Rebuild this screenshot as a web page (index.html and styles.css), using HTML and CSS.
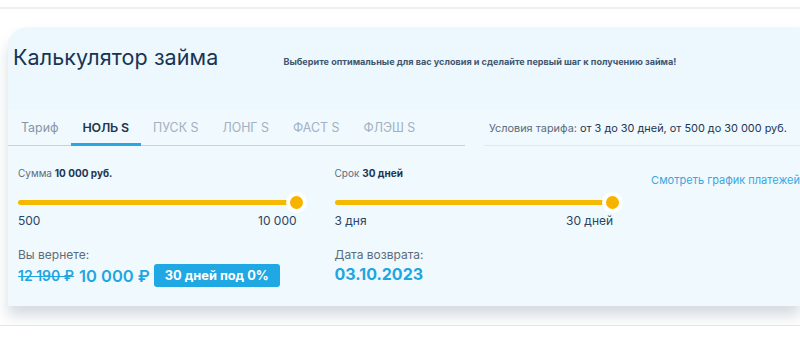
FILE: index.html
```html
<!DOCTYPE html>
<html lang="ru">
<head>
    <meta charset="UTF-8">
    <meta name="viewport" content="width=device-width, initial-scale=1.0">
    <title>Калькулятор займа</title>
    <link rel="stylesheet" href="styles.css">
</head>
<body>
<div class="topline"></div>
<div class="calc">
    <div class="calc-head">
        <h1 class="title">Калькулятор займа</h1>
        <p class="subtitle">Выберите оптимальные для вас условия и сделайте первый шаг к получению займа!</p>
    </div>
    <div class="calc-body">
        <div class="tabs-row">
            <div class="tabs">
                <div class="tab tab-label">Тариф</div>
                <div class="tab active">НОЛЬ S</div>
                <div class="tab">ПУСК S</div>
                <div class="tab">ЛОНГ S</div>
                <div class="tab">ФАСТ S</div>
                <div class="tab">ФЛЭШ S</div>
            </div>
            <div class="terms"><span class="muted">Условия тарифа:</span> от 3 до 30 дней, от 500 до 30 000 руб.</div>
        </div>
        <div class="sliders">
            <div class="slider-col">
                <div class="slider-label">Сумма <b>10 000 руб.</b></div>
                <div class="track"><div class="thumb"></div></div>
                <div class="range"><span>500</span><span>10 000</span></div>
                <div class="result-label">Вы вернете:</div>
                <div class="result">
                    <span class="old">12 190 ₽</span>
                    <span class="sum">10 000 ₽</span>
                    <span class="badge">30 дней под 0%</span>
                </div>
            </div>
            <div class="slider-col">
                <div class="slider-label">Срок <b>30 дней</b></div>
                <div class="track"><div class="thumb"></div></div>
                <div class="range"><span>3 дня</span><span>30 дней</span></div>
                <div class="result-label">Дата возврата:</div>
                <div class="result">
                    <span class="date">03.10.2023</span>
                </div>
            </div>
            <a class="schedule" href="#">Смотреть график платежей</a>
        </div>
    </div>
</div>
<div class="bottomline"></div>
</body>
</html>
```

FILE: styles.css
```css
body {
    margin: 0;
    background: #fff;
    font-family: Inter, "Noto Sans", sans-serif;
    color: #1d3651;
    overflow: hidden;
}

.topline {
    margin-top: 7px;
    height: 2px;
    background: #efefef;
}

.calc {
    margin: 18px 0 0 8px;
    border-radius: 20px 0 0 0;
    background: #ecf8fd;
    box-shadow: 0 10px 14px rgba(70, 90, 120, 0.22);
}

.calc-head {
    height: 83px;
    display: flex;
    align-items: baseline;
    padding: 0 0 0 5px;
}

.title {
    margin: 17px 0 0 0;
    font-size: 21.5px;
    font-weight: 400;
    color: #173454;
    letter-spacing: 0.1px;
}

.subtitle {
    margin: 0 0 0 65px;
    font-size: 9.1px;
    font-weight: 700;
    color: #3f5671;
}

.calc-body {
    background: #f0f9fe;
    height: 196px;
}

.tabs-row {
    display: flex;
    align-items: flex-end;
}

.tabs {
    display: flex;
    width: 457px;
    padding-left: 1px;
    border-bottom: 1px solid #a9ddf3;
    box-sizing: border-box;
}

.tab {
    padding: 10px 12px 8px;
    font-size: 12.4px;
    color: #a2b1be;
    border-bottom: 3px solid transparent;
    margin-bottom: -1px;
}

.tab-label {
    color: #8796a4;
}

.tab.active {
    padding: 10px 12px 8px;
    color: #1d3651;
    font-weight: 600;
    letter-spacing: -0.15px;
    border-bottom-color: #27a8e2;
}

.terms {
    margin-left: 19px;
    flex: 1;
    padding: 0 0 10px 5px;
    font-size: 10.9px;
    color: #1d3651;
    border-bottom: 1px solid #dfe9ef;
}

.muted {
    color: #5b6c7c;
}

.sliders {
    display: flex;
    padding: 21px 0 0 10px;
}

.slider-col {
    width: 279px;
    margin-right: 38px;
}

.slider-label {
    font-size: 10px;
    color: #5b6c7c;
}

.slider-label b {
    color: #1d3651;
}

.track {
    position: relative;
    margin: 21px 0 0 0;
    height: 5px;
    border-radius: 3px;
    background: #f6b900;
}

.thumb {
    position: absolute;
    right: -10px;
    top: -8px;
    width: 13px;
    height: 13px;
    border-radius: 50%;
    background: #f6b300;
    border: 4px solid #fff;
}

.range {
    display: flex;
    justify-content: space-between;
    margin-top: 8px;
    font-size: 12px;
    color: #2a4462;
}

.result-label {
    margin-top: 19px;
    font-size: 12px;
    color: #5b6c7c;
}

.result {
    display: flex;
    align-items: center;
    margin-top: 2px;
}

.old {
    font-size: 14px;
    font-weight: 600;
    color: #1ea6e0;
    text-decoration: line-through;
}

.sum {
    margin-left: 5px;
    font-size: 16.5px;
    font-weight: 600;
    color: #1ea6e0;
}

.badge {
    margin-left: 4px;
    padding: 4px 11px;
    border-radius: 3px;
    background: #1fa8e3;
    color: #fff;
    font-size: 12.8px;
    font-weight: 700;
}

.date {
    font-size: 16px;
    font-weight: 700;
    color: #1ea6e0;
}

.schedule {
    margin-top: 6px;
    font-size: 11px;
    color: #3aa8e0;
    text-decoration: none;
    white-space: nowrap;
}

.bottomline {
    margin-top: 19px;
    height: 1px;
    background: #e4e4e6;
}
```
